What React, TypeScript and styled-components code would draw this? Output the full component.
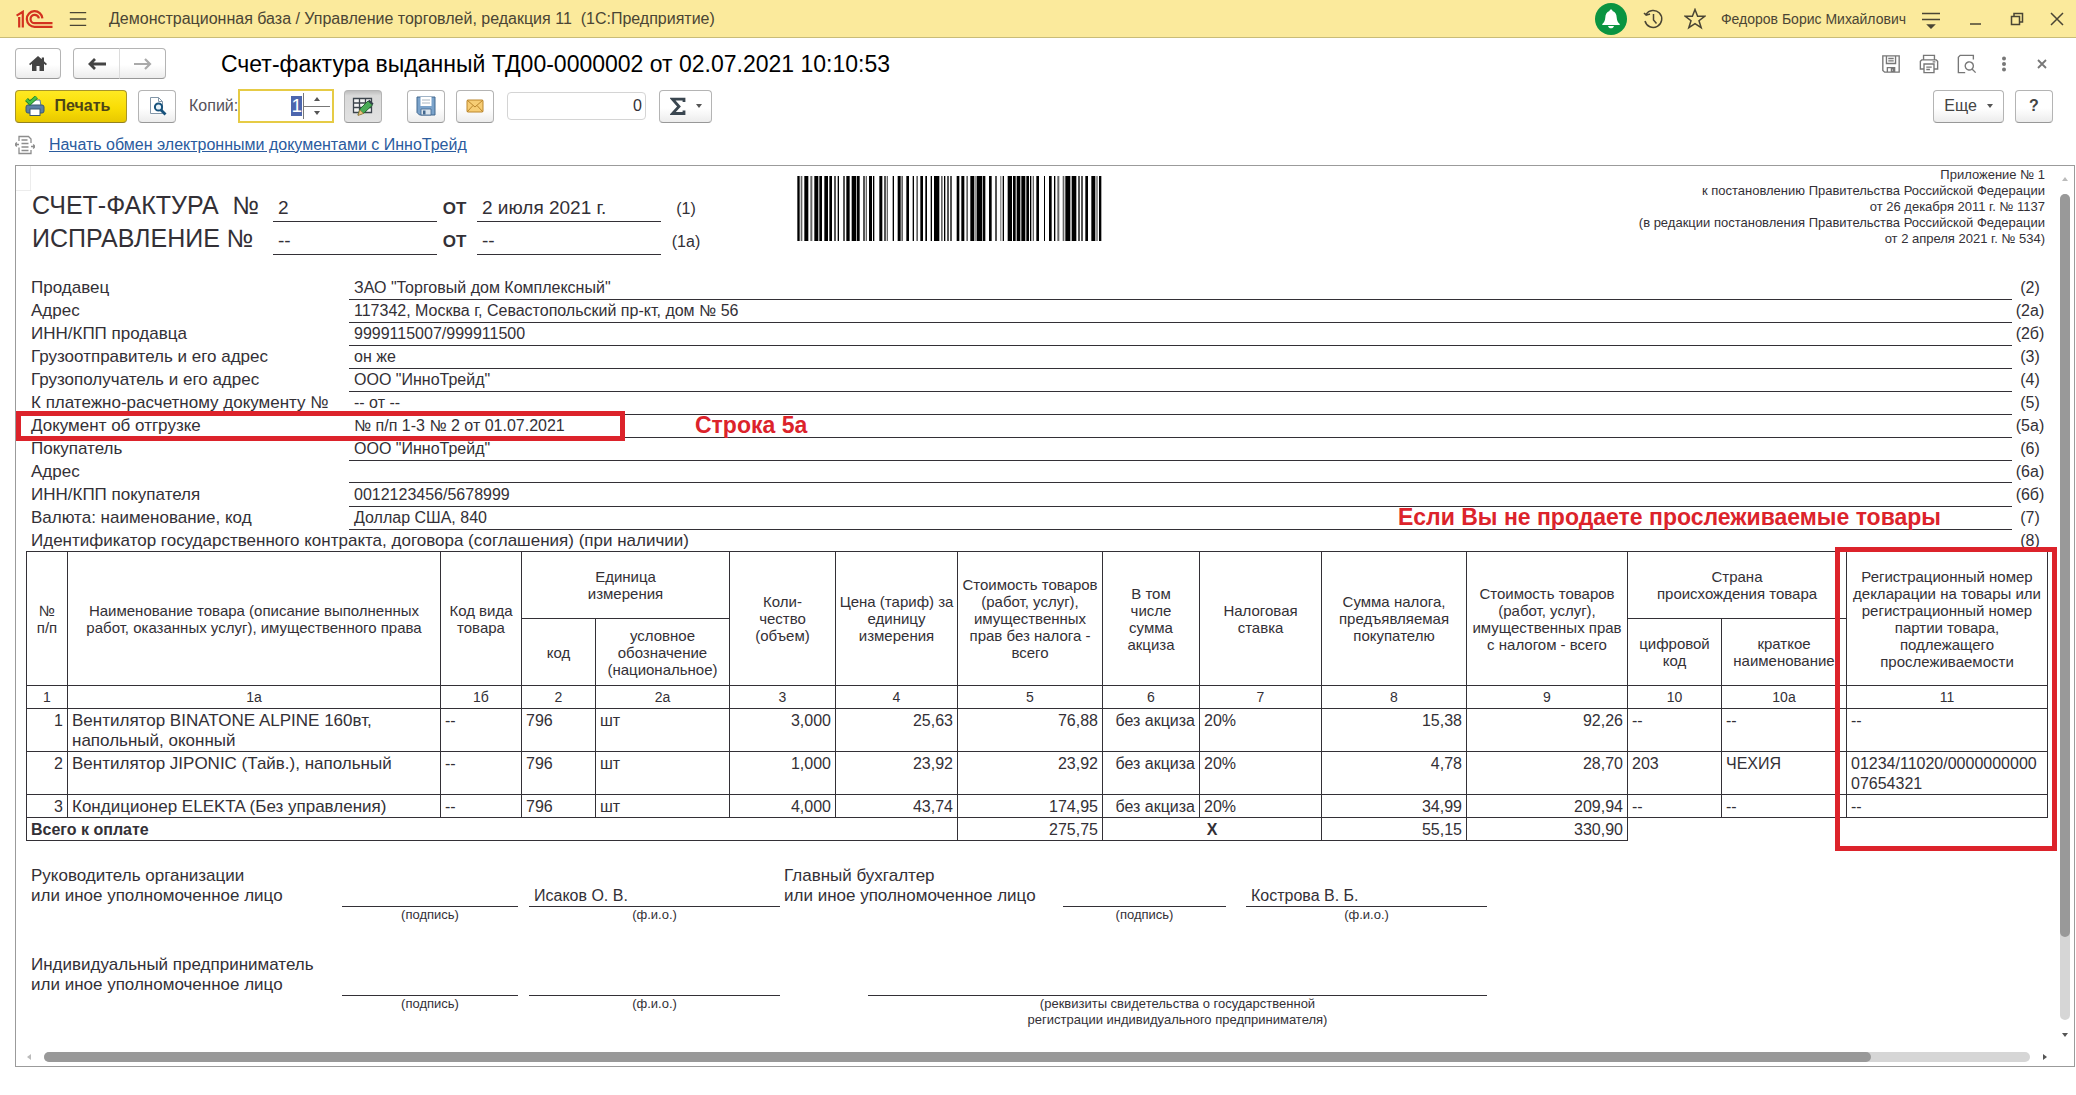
import React, { useEffect, useRef } from "react";
import styled, { createGlobalStyle } from "styled-components";

const INK = "#333036";
const RED = "#dc232b";

const GlobalStyle = createGlobalStyle`
  * { box-sizing: border-box; }
  body {
    margin: 0;
    background: #fff;
    color: ${INK};
    font: 16px/20px "Liberation Sans", Arial, sans-serif;
  }
  button, input { font: inherit; color: inherit; }
`;

/* ---------- window ---------- */

const Page = styled.div`
  display: flex;
  flex-direction: column;
  min-height: 100vh;
`;

const TitleBar = styled.header`
  display: flex;
  align-items: center;
  height: 38px;
  padding-left: 16px;
  background: #fbea9c;
  border-bottom: 1px solid #c9bc78;
`;

const AppName = styled.span`
  flex: 1;
  margin-left: 15px;
  white-space: pre;
  color: #4a4534;
`;

const UserName = styled.span`
  margin: 0 12px 0 5px;
  font-size: 14px;
  color: #4a4534;
`;

const PlainButton = styled.button<{ $w?: number }>`
  display: flex;
  align-items: center;
  justify-content: center;
  width: ${(p) => p.$w ?? 42}px;
  height: 32px;
  padding: 0;
  border: 0;
  background: none;
`;

const Bell = styled(PlainButton)`
  width: 32px;
  margin-right: 5px;
  border-radius: 50%;
  background: #0a9441;
`;

/* ---------- form header ---------- */

const NavRow = styled.div`
  display: flex;
  align-items: center;
  height: 31px;
  margin: 10px 15px 10px 15px;
`;

const ToolButton = styled.button<{ $w: number; $kind?: "primary" | "pressed" }>`
  display: flex;
  align-items: center;
  justify-content: center;
  gap: 10px;
  width: ${(p) => p.$w}px;
  height: 33px;
  padding: ${(p) => (p.$kind === "primary" ? "0 7px 0 0" : "0")};
  border: 1px solid ${(p) => (p.$kind === "primary" ? "#a8952a" : "#b4b4b4")};
  border-bottom-color: ${(p) => (p.$kind === "primary" ? "#93811f" : "#989898")};
  border-radius: 4px;
  font-weight: ${(p) => (p.$kind === "primary" ? "bold" : "normal")};
  color: ${(p) => (p.$kind === "primary" ? "#4d4517" : "#444")};
  background: ${(p) =>
    p.$kind === "primary"
      ? "linear-gradient(#ffe922, #f9dd05 55%, #e8c800)"
      : p.$kind === "pressed"
      ? "linear-gradient(#bdbdbd, #d9d9d9 15%, #e2e2e2)"
      : "linear-gradient(#fff 55%, #ececec)"};
`;

const NavButton = styled(ToolButton)`
  height: 31px;
`;

const NavPair = styled.div`
  display: flex;
  margin-left: 12px;
  button:first-child { border-radius: 4px 0 0 4px; }
  button:last-child { border-radius: 0 4px 4px 0; border-left-color: #dcdcdc; margin-left: -1px; }
`;

const FormTitle = styled.h1`
  flex: 1;
  margin: 0 0 0 55px;
  font-size: 23px;
  line-height: 28px;
  font-weight: normal;
  color: #000;
`;

const ToolRow = styled.div`
  display: flex;
  align-items: center;
  height: 34px;
  margin: 0 23px 0 15px;
`;

const Gap = styled.span<{ $w?: number }>`
  flex: ${(p) => (p.$w ? `0 0 ${p.$w}px` : "1")};
`;

const CopiesLabel = styled.label`
  width: 49px;
  color: #55525a;
`;

const Spin = styled.div`
  display: flex;
  width: 96px;
  height: 34px;
  border: 2px solid #e6cb45;
  background: #fff;
`;

const CopiesInput = styled.input`
  flex: 1;
  min-width: 0;
  border: 0;
  padding: 0 1px;
  outline: 0;
  text-align: right;
  font-size: 19px;
  &::selection { background: #4c66ae; color: #fff; }
`;

const SpinButtons = styled.div`
  display: flex;
  flex-direction: column;
  width: 27px;
  margin: 2px 2px 2px 0;
  border-left: 1px solid #777;
  button {
    display: flex;
    align-items: center;
    justify-content: center;
    flex: 1;
    padding: 0;
    border: 0;
    background: none;
  }
  button:first-child { border-bottom: 1px solid #777; }
`;

const SumField = styled.input`
  width: 139px;
  height: 28px;
  padding: 0 3px;
  border: 1px solid #d4d4d4;
  border-radius: 4px;
  text-align: right;
`;

const ExchangeRow = styled.div`
  display: flex;
  align-items: center;
  gap: 14px;
  height: 42px;
  padding: 2px 0 0 15px;
  a { color: #2a5b9e; }
`;

/* ---------- spreadsheet panel ---------- */

const Panel = styled.main`
  flex: 1;
  display: grid;
  grid-template-columns: minmax(0, 1fr) 16px;
  grid-template-rows: 1fr 16px;
  margin: 0 1px 28px 15px;
  border: 1px solid #9b9b9b;
`;

const Sheet = styled.section`
  position: relative;
  padding: 0 10px;
  &::before {
    content: "";
    position: absolute;
    left: 0;
    top: 0;
    width: 14px;
    height: 24px;
    border: solid #ececec;
    border-width: 0 1px 1px 0;
  }
`;

const ScrollBar = styled.div<{ $vertical?: boolean }>`
  display: flex;
  flex-direction: ${(p) => (p.$vertical ? "column" : "row")};
  align-items: center;
  padding: ${(p) => (p.$vertical ? "10px 4px 12px 2px" : "2px 10px 4px")};
`;

const Track = styled.div<{ $vertical?: boolean }>`
  display: flex;
  flex: 1;
  flex-direction: ${(p) => (p.$vertical ? "column" : "row")};
  width: ${(p) => (p.$vertical ? "10px" : "auto")};
  height: ${(p) => (p.$vertical ? "auto" : "10px")};
  margin: ${(p) => (p.$vertical ? "12px 0" : "0 12px")};
  border-radius: 5px;
  background: #d6d6d6;
`;

const Thumb = styled.div<{ $share: number }>`
  flex: 0 0 ${(p) => p.$share}%;
  border-radius: 5px;
  background: #999;
`;

/* ---------- invoice head ---------- */

const Head = styled.div`
  display: flex;
  align-items: flex-start;
  height: 110px;
`;

const TitleGrid = styled.div`
  display: grid;
  grid-template-columns: 241px 164px 40px 184px 50px;
  grid-auto-rows: 33px;
  align-items: baseline;
  padding: 22px 0 0 6px;
`;

const DocName = styled.span`
  padding-top: 3px;
  font-size: 25px;
  line-height: 28px;
  white-space: pre;
`;

const DocValue = styled.span`
  padding-left: 5px;
  border-bottom: 1px solid ${INK};
  font-size: 19px;
  line-height: 26px;
`;

const DocFrom = styled.b`
  padding-right: 5px;
  font-size: 17px;
  text-align: center;
`;

const DocMark = styled.span`
  text-align: center;
`;

const BarcodeBox = styled.svg`
  margin: 10px 0 0 86px;
`;

const Appendix = styled.p`
  flex: 1;
  margin: 1px 3px 0 0;
  font-size: 13px;
  line-height: 16px;
  text-align: right;
`;

const Field = styled.div`
  position: relative;
  display: grid;
  grid-template-columns: 318px 1fr 36px;
  height: 23px;
  padding-left: 5px;
  line-height: 23px;
  white-space: nowrap;
  &:last-child { height: 22px; }
`;

const FieldLabel = styled.span`
  font-size: 17px;
`;

const FieldValue = styled.span<{ $line: boolean }>`
  padding-left: 5px;
  border-bottom: ${(p) => (p.$line ? `1px solid ${INK}` : "0")};
`;

const FieldMark = styled.span`
  text-align: center;
`;

const FieldFrame = styled.div`
  position: absolute;
  left: -10px;
  top: -3px;
  width: 609px;
  height: 30px;
  border: 5px solid ${RED};
`;

const Note = styled.strong<{ $left?: number; $right?: number }>`
  position: absolute;
  top: 0;
  ${(p) => (p.$left !== undefined ? `left: ${p.$left}px;` : `right: ${p.$right}px;`)}
  font-size: 23px;
  line-height: 22px;
  color: ${RED};
`;

/* ---------- goods table ---------- */

const TableWrap = styled.div`
  position: relative;
`;

const ColumnFrame = styled.div`
  position: absolute;
  top: -4px;
  right: -9px;
  width: 222px;
  height: 304px;
  border: 5px solid ${RED};
`;

const Goods = styled.table`
  width: 100%;
  table-layout: fixed;
  border-collapse: collapse;
`;

const Col = styled.col<{ $w?: number }>`
  width: ${(p) => (p.$w ? `${p.$w}px` : "auto")};
`;

const HeadCell = styled.th`
  height: 67px;
  padding: 0;
  border: 1px solid ${INK};
  font-size: 15px;
  line-height: 17px;
  font-weight: normal;
  white-space: pre;
`;

const NumCell = styled.th`
  height: 23px;
  padding: 0;
  border: 1px solid ${INK};
  font-size: 14px;
  line-height: 20px;
  font-weight: normal;
`;

const Cell = styled.td<{ $align?: string; $name?: boolean }>`
  padding: 2px 4px 0;
  border: 1px solid ${INK};
  vertical-align: top;
  text-align: ${(p) => p.$align ?? "left"};
  white-space: pre;
  font-size: ${(p) => (p.$name ? 17 : 16)}px;
  line-height: 20px;
`;

/* ---------- signatures ---------- */

const Signatures = styled.div`
  display: grid;
  grid-template-columns: 311px 176px 11px 251px 4px 84px 195px 163px 20px 241px;
  padding: 25px 0 0 5px;
  row-gap: 32px;
`;

const SignLabel = styled.div<{ $at: string }>`
  grid-column: ${(p) => p.$at};
  font-size: 17px;
  line-height: 20px;
  white-space: pre;
`;

const SignSlot = styled.div<{ $at: string }>`
  grid-column: ${(p) => p.$at};
  padding-top: 20px;
`;

const SignValue = styled.div`
  height: 21px;
  padding-left: 5px;
  border-bottom: 1px solid ${INK};
`;

const Caption = styled.div`
  font-size: 13px;
  line-height: 16px;
  text-align: center;
  white-space: pre;
`;

/* ---------- icons ---------- */

const Logo = () => (
  <svg width="37" height="18" viewBox="0 0 37 18" fill="none" stroke="#d3321f" strokeWidth="2.2" aria-label="1С">
    <path d="M3.200 7V17.600M.6 5.600 6.800 1.800V17.600" strokeWidth="2.200" />
    <path d="M26.400 8.400A7.800 7.800 0 1 0 18.800 16.800H36.500" />
    <path d="M22.900 8.400A4.200 4.200 0 1 0 18.800 13.200H36.500" />
  </svg>
);

const Line = ({ d, w = 22, color = "#4a4534", sw = 1.5, fill = "none" }: { d: string; w?: number; color?: string; sw?: number; fill?: string }) => (
  <svg width={w} height={w} viewBox="0 0 22 22" fill={fill} stroke={color} strokeWidth={sw}>
    <path d={d} />
  </svg>
);

const Triangle = ({ dir, color = "#555" }: { dir: "up" | "down" | "left" | "right"; color?: string }) => {
  const d = { up: "M0 5h6L3 1z", down: "M0 1h6L3 5z", left: "M5 0v6L1 3z", right: "M1 0v6l4-3z" }[dir];
  return (
    <svg width="6" height="6" viewBox="0 0 6 6" fill={color}>
      <path d={d} />
    </svg>
  );
};

const PrintIcon = () => (
  <svg width="20" height="21" viewBox="0 0 20 21">
    <path d="M5 4h10l1 6H4z" fill="#fff" stroke="#56789a" />
    <rect x="1" y="9" width="18" height="8" rx="2" fill="#5b7fa4" stroke="#3a5875" />
    <rect x="5" y="13" width="10" height="6.5" fill="#fff" stroke="#3a5875" />
    <path d="M1.500 3.500 5 7l6.500-6" fill="none" stroke="#1d7d25" strokeWidth="4" />
    <path d="M1.500 3.500 5 7l6.500-6" fill="none" stroke="#48c046" strokeWidth="2.400" />
  </svg>
);

const PreviewIcon = () => (
  <svg width="20" height="22" viewBox="0 0 20 22" fill="none">
    <path d="M3.500 2.500h8l4 4v12h-12z" fill="#fff" stroke="#8296a8" />
    <path d="M11.500 2.500v4h4" stroke="#8296a8" />
    <circle cx="11.500" cy="12" r="3.600" fill="#e6f1f8" stroke="#17527c" strokeWidth="2" />
    <path d="m14 15 4.500 4.500" stroke="#17527c" strokeWidth="2.800" />
  </svg>
);

const EditGridIcon = () => (
  <svg width="22" height="22" viewBox="0 0 22 22" fill="none">
    <path d="M1.500 3.500h18v14h-18zM1.500 8h18M1.500 12.500h18M7.500 3.500v14M13.500 3.500v14" fill="#f4f4f4" stroke="#3c444c" strokeWidth="1.300" />
    <path d="m6 20 2-6L16 6l4.500 4-8.500 8z" fill="#4bab57" stroke="#286b33" />
    <path d="m6 20.500 1.800-5.500 3.700 3.500z" fill="#ecc585" stroke="#9a7434" strokeWidth=".7" />
    <path d="m16 6 1.500-1.200 4 3.700L20.500 10z" fill="#34414c" />
  </svg>
);

const FloppyIcon = () => (
  <svg width="20" height="20" viewBox="0 0 20 20">
    <path d="M1 1h18v18H3.500L1 16.500z" fill="#7ba3cb" stroke="#43688f" />
    <path d="M4.500 1h11v9h-11z" fill="#fff" />
    <path d="M6 4h8M6 7h8" stroke="#a9b6c2" />
    <path d="M5 13h10v6H5z" fill="#dbe5ee" stroke="#43688f" strokeWidth=".8" />
    <path d="M7 14.500h2.500v4H7z" fill="#43688f" />
  </svg>
);

const MailIcon = () => (
  <svg width="18" height="14" viewBox="0 0 18 14">
    <rect x="1" y="1" width="16" height="12" rx="1" fill="#f7cd74" stroke="#bb862c" />
    <path d="m1 1 8 7 8-7M1 13l6-6.500M17 13l-6-6.500" fill="none" stroke="#bb862c" />
  </svg>
);

const SigmaIcon = () => (
  <svg width="16" height="19" viewBox="0 0 16 19" fill="none" stroke="#3a4650" strokeWidth="2.800">
    <path d="M14 5V2.200H2.500L9 9.500l-6.500 7H14V13.500" />
  </svg>
);

const ExchangeIcon = () => (
  <svg width="20" height="20" viewBox="0 0 20 20" fill="none" stroke="#8d8d8d" strokeWidth="1.300">
    <path d="M4 6V1.500h9.500L16 4v4M4 12.500v6h12V15M6.500 5h6M6.500 8.500h7M6.500 12h7M6.500 15.500h7" />
    <path d="M0 9.500h4M1.800 7.500 0 9.500l1.800 2M20 11.500h-4M18.200 9.500l1.800 2-1.800 2" />
  </svg>
);

const BAR_EDGES: [number, number, number?][] = [
  [231, 238], [241, 246, 1], [252, 264], [270, 276, 1], [282, 294], [297, 305], [312, 323], [327, 335],
  [342, 346], [352, 356], [369, 373], [378, 388], [394, 408], [410, 418], [429, 433], [436, 440, 1],
  [446, 455], [458, 462], [477, 486], [492, 496], [499, 503, 1], [517, 521], [532, 541], [543, 548, 1],
  [558, 566], [577, 581], [588, 593, 1], [600, 608], [615, 620], [631, 635], [641, 657], [662, 667, 1],
  [671, 675], [681, 685], [690, 694], [709, 717], [723, 732], [738, 743, 1], [750, 762], [765, 769, 1],
  [770, 785], [787, 795], [806, 814], [825, 829], [840, 843, 1], [847, 851], [862, 875], [878, 886],
  [889, 900], [903, 915], [918, 926], [929, 933], [937, 941, 1], [948, 956], [971, 974], [986, 994],
  [1001, 1005], [1011, 1017, 1], [1027, 1032, 1], [1035, 1050], [1054, 1068], [1074, 1078], [1083, 1087],
  [1095, 1103], [1113, 1125], [1128, 1132, 1], [1136, 1143],
];

const Barcode = () => (
  <BarcodeBox width="305" height="65" viewBox="230 0 915 65" preserveAspectRatio="none" role="img" aria-label="Штрихкод">
    {BAR_EDGES.map(([a, b, soft]) => (
      <rect key={a} x={a} y="0" width={b - a} height="65" fill={soft ? "#666" : "#000"} />
    ))}
  </BarcodeBox>
);

/* ---------- data ---------- */

const FIELDS: [string, string, string][] = [
  ["Продавец", 'ЗАО "Торговый дом Комплексный"', "(2)"],
  ["Адрес", "117342, Москва г, Севастопольский пр-кт, дом № 56", "(2а)"],
  ["ИНН/КПП продавца", "9999115007/999911500", "(2б)"],
  ["Грузоотправитель и его адрес", "он же", "(3)"],
  ["Грузополучатель и его адрес", 'ООО "ИнноТрейд"', "(4)"],
  ["К платежно-расчетному документу №", "-- от --", "(5)"],
  ["Документ об отгрузке", "№ п/п 1-3 № 2 от 01.07.2021", "(5а)"],
  ["Покупатель", 'ООО "ИнноТрейд"', "(6)"],
  ["Адрес", "", "(6а)"],
  ["ИНН/КПП покупателя", "0012123456/5678999", "(6б)"],
  ["Валюта: наименование, код", "Доллар США, 840", "(7)"],
  ["Идентификатор государственного контракта, договора (соглашения) (при наличии)", "", "(8)"],
];

const COLS = [41, 0, 81, 74, 134, 106, 122, 145, 97, 122, 145, 161, 94, 125, 201];
const NUMBERS = ["1", "1а", "1б", "2", "2а", "3", "4", "5", "6", "7", "8", "9", "10", "10а", "11"];
const RIGHT = new Set([0, 5, 6, 7, 8, 10, 11]);

const ROWS = [
  ["1", "Вентилятор BINATONE ALPINE 160вт,\nнапольный, оконный", "--", "796", "шт", "3,000", "25,63", "76,88", "без акциза", "20%", "15,38", "92,26", "--", "--", "--"],
  ["2", "Вентилятор JIPONIC (Тайв.), напольный", "--", "796", "шт", "1,000", "23,92", "23,92", "без акциза", "20%", "4,78", "28,70", "203", "ЧЕХИЯ", "01234/11020/0000000000\n07654321"],
  ["3", "Кондиционер ELEKTA (Без управления)", "--", "796", "шт", "4,000", "43,74", "174,95", "без акциза", "20%", "34,99", "209,94", "--", "--", "--"],
];

export default function App() {
  const copies = useRef<HTMLInputElement>(null);
  useEffect(() => {
    copies.current?.focus();
    copies.current?.select();
  }, []);

  return (
    <Page>
      <GlobalStyle />
      <TitleBar>
        <Logo />
        <Gap $w={9} />
        <PlainButton $w={32} aria-label="Главное меню">
          <Line d="M2 4h18M2 11h18M2 18h18" w={20} />
        </PlainButton>
        <AppName>{"Демонстрационная база / Управление торговлей, редакция 11  (1С:Предприятие)"}</AppName>
        <Bell aria-label="Оповещения">
          <svg width="20" height="22" viewBox="0 0 20 22" fill="#fff">
            <path d="M10 1.500c1 0 1.500.7 1.500 1.600 3 .9 4 3.400 4.200 6.400.2 3 1 4.800 3 6.500v1H1.300v-1c2-1.700 2.800-3.500 3-6.500.2-3 1.200-5.500 4.200-6.400 0-.9.5-1.600 1.500-1.600zM7 18h6c-.5 1.600-1.500 2.300-3 2.300S7.500 19.600 7 18z" />
          </svg>
        </Bell>
        <PlainButton aria-label="История">
          <Line d="M4 6.500A8.500 8.500 0 1 1 3 13M2 5l2.200 2.200L8 6M11.500 6v6l3 3.500" />
        </PlainButton>
        <PlainButton aria-label="Избранное">
          <Line d="m11 1.500 2.600 6.800h7l-5.600 4.400 2.200 7L11 15.700l-6.200 4 2.200-7L1.400 8.300h7z" />
        </PlainButton>
        <UserName>Федоров Борис Михайлович</UserName>
        <PlainButton $w={26} aria-label="Настройка">
          <Line d="M2 5.500h18M2 11.500h18M8 17h6l-3 3z" fill="#4a4534" />
        </PlainButton>
        <Gap $w={10} />
        <PlainButton aria-label="Свернуть"><Line d="M6 16h11" /></PlainButton>
        <PlainButton aria-label="Развернуть"><Line d="M5.500 8.500h8v8h-8zM8 8V5.500h8.500V14H14" /></PlainButton>
        <PlainButton $w={38} aria-label="Закрыть"><Line d="m5 5 12 12M17 5 5 17" /></PlainButton>
      </TitleBar>

      <NavRow>
        <NavButton $w={46} aria-label="Начальная страница">
          <svg width="18" height="16" viewBox="0 0 18 16" fill="#444">
            <path d="M9 0 0 8l1.200 1.200L3 7.800V15h4.500v-5h3v5H15V7.800l1.800 1.400L18 8l-3-2.700V1.500h-2.200v1.800z" />
          </svg>
        </NavButton>
        <NavPair>
          <NavButton $w={47} aria-label="Назад"><svg width="18" height="12" viewBox="0 0 18 12" fill="none" stroke="#444" strokeWidth="2.800"><path d="M18 6H3M7 1 2 6l5 5" /></svg></NavButton>
          <NavButton $w={47} aria-label="Вперед"><svg width="18" height="12" viewBox="0 0 18 12" fill="none" stroke="#aaa" strokeWidth="2.200"><path d="M0 6h15M11 1l5 5-5 5" /></svg></NavButton>
        </NavPair>
        <FormTitle>Счет-фактура выданный ТД00-0000002 от 02.07.2021 10:10:53</FormTitle>
        <PlainButton $w={38} aria-label="Сохранить"><Line w={20} color="#777" d="M2 2h18v18H4l-2-2zM6 2v8.500h10V2M8 5h6M8 7.500h6M7 20v-5h8v5M11.500 16v3.500h2V16z" /></PlainButton>
        <PlainButton $w={38} aria-label="Печать"><Line w={20} color="#777" d="M5 6V1.500h12V6M5 16.500H1.500V8l1.500-1.500h16L20.500 8v8.500H17M5.500 11h11v9.500h-11zM8 14.500h6M8 17h4M15 8.700h3" /></PlainButton>
        <PlainButton $w={37} aria-label="Просмотр"><Line w={20} color="#777" d="M9 20.500H1.500v-17l2-2H18V6M16.500 16.500A4.500 4.500 0 1 1 18 13a4.500 4.500 0 0 1-1.500 3.500zl4 4" /></PlainButton>
        <PlainButton $w={38} aria-label="Меню"><svg width="6" height="16" viewBox="0 0 6 16" fill="#777"><circle cx="3" cy="2.500" r="2" /><circle cx="3" cy="8" r="2" /><circle cx="3" cy="13.500" r="2" /></svg></PlainButton>
        <PlainButton $w={38} aria-label="Закрыть форму"><Line color="#777" d="m7 7 8 8M15 7l-8 8" sw={1.8} /></PlainButton>
      </NavRow>

      <ToolRow>
        <ToolButton $w={112} $kind="primary"><PrintIcon />Печать</ToolButton>
        <Gap $w={11} />
        <ToolButton $w={38} aria-label="Предварительный просмотр"><PreviewIcon /></ToolButton>
        <Gap $w={13} />
        <CopiesLabel htmlFor="copies">Копий:</CopiesLabel>
        <Spin>
          <CopiesInput id="copies" ref={copies} defaultValue="1" inputMode="numeric" />
          <SpinButtons>
            <button aria-label="Больше"><Triangle dir="up" /></button>
            <button aria-label="Меньше"><Triangle dir="down" /></button>
          </SpinButtons>
        </Spin>
        <Gap $w={10} />
        <ToolButton $w={38} $kind="pressed" aria-label="Редактирование" aria-pressed="true"><EditGridIcon /></ToolButton>
        <Gap $w={25} />
        <ToolButton $w={38} aria-label="Записать"><FloppyIcon /></ToolButton>
        <Gap $w={11} />
        <ToolButton $w={38} aria-label="Отправить"><MailIcon /></ToolButton>
        <Gap $w={13} />
        <SumField aria-label="Сумма" defaultValue="0" />
        <Gap $w={13} />
        <ToolButton $w={53} aria-label="Показатель"><SigmaIcon /><Triangle dir="down" /></ToolButton>
        <Gap />
        <ToolButton $w={71}>Еще<Triangle dir="down" /></ToolButton>
        <Gap $w={11} />
        <ToolButton $w={38} aria-label="Справка"><b>?</b></ToolButton>
      </ToolRow>

      <ExchangeRow>
        <ExchangeIcon />
        <a href="#exchange">Начать обмен электронными документами с ИнноТрейд</a>
      </ExchangeRow>

      <Panel>
        <Sheet>
          <Head>
            <TitleGrid>
              <DocName>{"СЧЕТ-ФАКТУРА  №"}</DocName>
              <DocValue>2</DocValue>
              <DocFrom>ОТ</DocFrom>
              <DocValue>2 июля 2021 г.</DocValue>
              <DocMark>(1)</DocMark>
              <DocName>ИСПРАВЛЕНИЕ №</DocName>
              <DocValue>--</DocValue>
              <DocFrom>ОТ</DocFrom>
              <DocValue>--</DocValue>
              <DocMark>(1а)</DocMark>
            </TitleGrid>
            <Barcode />
            <Appendix>
              Приложение № 1<br />
              к постановлению Правительства Российской Федерации<br />
              от 26 декабря 2011 г. № 1137<br />
              (в редакции постановления Правительства Российской Федерации<br />
              от 2 апреля 2021 г. № 534)
            </Appendix>
          </Head>

          <div>
            {FIELDS.map(([label, value, mark]) => (
              <Field key={mark}>
                <FieldLabel>{label}</FieldLabel>
                <FieldValue $line={mark !== "(8)"}>{value}</FieldValue>
                <FieldMark>{mark}</FieldMark>
                {mark === "(5а)" && <FieldFrame />}
                {mark === "(5а)" && <Note $left={669}>Строка 5а</Note>}
                {mark === "(7)" && <Note $right={107}>Если Вы не продаете прослеживаемые товары</Note>}
              </Field>
            ))}
          </div>

          <TableWrap>
            <Goods>
              <colgroup>
                {COLS.map((w, i) => <Col key={i} $w={w} />)}
              </colgroup>
              <thead>
                <tr>
                  <HeadCell rowSpan={2}>{"№\nп/п"}</HeadCell>
                  <HeadCell rowSpan={2}>{"Наименование товара (описание выполненных\nработ, оказанных услуг), имущественного права"}</HeadCell>
                  <HeadCell rowSpan={2}>{"Код вида\nтовара"}</HeadCell>
                  <HeadCell colSpan={2}>{"Единица\nизмерения"}</HeadCell>
                  <HeadCell rowSpan={2}>{"Коли-\nчество\n(объем)"}</HeadCell>
                  <HeadCell rowSpan={2}>{"Цена (тариф) за\nединицу\nизмерения"}</HeadCell>
                  <HeadCell rowSpan={2}>{"Стоимость товаров\n(работ, услуг),\nимущественных\nправ без налога -\nвсего"}</HeadCell>
                  <HeadCell rowSpan={2}>{"В том\nчисле\nсумма\nакциза"}</HeadCell>
                  <HeadCell rowSpan={2}>{"Налоговая\nставка"}</HeadCell>
                  <HeadCell rowSpan={2}>{"Сумма налога,\nпредъявляемая\nпокупателю"}</HeadCell>
                  <HeadCell rowSpan={2}>{"Стоимость товаров\n(работ, услуг),\nимущественных прав\nс налогом - всего"}</HeadCell>
                  <HeadCell colSpan={2}>{"Страна\nпроисхождения товара"}</HeadCell>
                  <HeadCell rowSpan={2}>{"Регистрационный номер\nдекларации на товары или\nрегистрационный номер\nпартии товара,\nподлежащего\nпрослеживаемости"}</HeadCell>
                </tr>
                <tr>
                  <HeadCell>код</HeadCell>
                  <HeadCell>{"условное\nобозначение\n(национальное)"}</HeadCell>
                  <HeadCell>{"цифровой\nкод"}</HeadCell>
                  <HeadCell>{"краткое\nнаименование"}</HeadCell>
                </tr>
                <tr>
                  {NUMBERS.map((n) => <NumCell key={n}>{n}</NumCell>)}
                </tr>
              </thead>
              <tbody>
                {ROWS.map((row) => (
                  <tr key={row[0]}>
                    {row.map((text, i) => (
                      <Cell key={i} $align={RIGHT.has(i) ? "right" : "left"} $name={i === 1}>{text}</Cell>
                    ))}
                  </tr>
                ))}
                <tr>
                  <Cell colSpan={7}><b>Всего к оплате</b></Cell>
                  <Cell $align="right">275,75</Cell>
                  <Cell colSpan={2} $align="center"><b>Х</b></Cell>
                  <Cell $align="right">55,15</Cell>
                  <Cell $align="right">330,90</Cell>
                </tr>
              </tbody>
            </Goods>
            <ColumnFrame />
          </TableWrap>

          <Signatures>
            <SignLabel $at="1">{"Руководитель организации\nили иное уполномоченное лицо"}</SignLabel>
            <SignSlot $at="2"><SignValue /><Caption>(подпись)</Caption></SignSlot>
            <SignSlot $at="4"><SignValue>Исаков О. В.</SignValue><Caption>(ф.и.о.)</Caption></SignSlot>
            <SignLabel $at="6 / 8">{"Главный бухгалтер\nили иное уполномоченное лицо"}</SignLabel>
            <SignSlot $at="8"><SignValue /><Caption>(подпись)</Caption></SignSlot>
            <SignSlot $at="10"><SignValue>Кострова В. Б.</SignValue><Caption>(ф.и.о.)</Caption></SignSlot>

            <SignLabel $at="1">{"Индивидуальный предприниматель\nили иное уполномоченное лицо"}</SignLabel>
            <SignSlot $at="2"><SignValue /><Caption>(подпись)</Caption></SignSlot>
            <SignSlot $at="4"><SignValue /><Caption>(ф.и.о.)</Caption></SignSlot>
            <SignSlot $at="7 / 11"><SignValue /><Caption>{"(реквизиты свидетельства о государственной\nрегистрации индивидуального предпринимателя)"}</Caption></SignSlot>
          </Signatures>
        </Sheet>

        <ScrollBar $vertical>
          <Triangle dir="up" color="#bbb" />
          <Track $vertical><Thumb $share={90} /></Track>
          <Triangle dir="down" />
        </ScrollBar>
        <ScrollBar>
          <Triangle dir="left" color="#bbb" />
          <Track><Thumb $share={92} /></Track>
          <Triangle dir="right" />
        </ScrollBar>
      </Panel>
    </Page>
  );
}
